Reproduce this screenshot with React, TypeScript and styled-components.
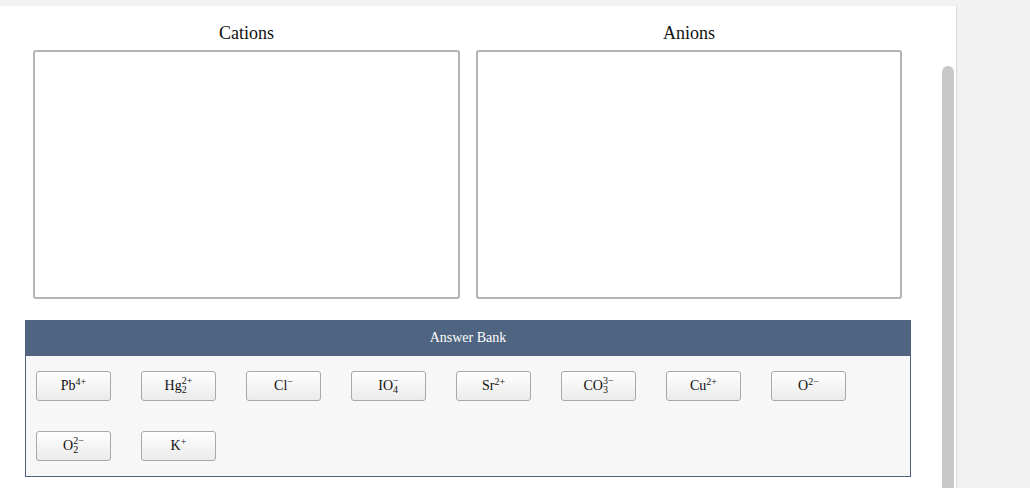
import styled, { createGlobalStyle } from "styled-components";

const GlobalStyle = createGlobalStyle`
  body {
    margin: 0;
    background: #f2f2f2;
    font-family: "Liberation Serif", "Times New Roman", serif;
  }
`;

const Page = styled.div`
  position: relative;
  width: 956px;
  height: 482px;
  margin-top: 6px;
  background: #ffffff;
  box-shadow: 1px 0 1px #dcdcdc;
  overflow: hidden;
`;

const ScrollThumb = styled.div`
  position: absolute;
  left: 942px;
  top: 60px;
  width: 12px;
  height: 440px;
  border-radius: 6px;
  background: #c8c8c8;
`;

const Columns = styled.div`
  display: grid;
  grid-template-columns: 427px 426px;
  column-gap: 16px;
  padding-left: 33px;
`;

const Column = styled.div`
  display: flex;
  flex-direction: column;
`;

const Title = styled.div`
  height: 44px;
  padding-top: 17px;
  box-sizing: border-box;
  text-align: center;
  font-size: 18px;
  line-height: 20px;
  color: #111;
`;

const DropBox = styled.div`
  height: 249px;
  box-sizing: border-box;
  border: 2px solid #b4b4b4;
  border-radius: 3px;
  background: #fff;
`;

const Bank = styled.div`
  width: 886px;
  margin: 21px 0 0 25px;
`;

const BankHeader = styled.div`
  height: 36px;
  background: #4e6480;
  color: #fff;
  font-size: 14px;
  display: flex;
  align-items: center;
  justify-content: center;
`;

const BankBody = styled.div`
  display: flex;
  flex-wrap: wrap;
  gap: 30px;
  padding: 15px 10px 15px 10px;
  background: #f7f7f7;
  border: 1px solid #4e6480;
  border-top: none;
`;

const Chip = styled.div`
  width: 75px;
  height: 30px;
  box-sizing: border-box;
  border: 1px solid #a9a9a9;
  border-radius: 3px;
  background: linear-gradient(#ffffff, #ebebeb);
  display: flex;
  align-items: center;
  justify-content: center;
  font-size: 14px;
  color: #111;
`;

const Base = styled.span`
  line-height: 1;
`;

const Scripts = styled.span`
  display: inline-flex;
  flex-direction: column;
  font-size: 10px;
  line-height: 9px;
  transform: translateY(-1px);
`;

const Sup = styled.span`
  font-size: 10px;
  position: relative;
  top: -5px;
`;

interface IonProps {
  base: string;
  sup: string;
  sub?: string;
}

function Ion({ base, sup, sub }: IonProps) {
  return (
    <Chip>
      <Base>{base}</Base>
      {sub ? (
        <Scripts>
          <span>{sup}</span>
          <span>{sub}</span>
        </Scripts>
      ) : (
        <Sup>{sup}</Sup>
      )}
    </Chip>
  );
}

const ions: IonProps[] = [
  { base: "Pb", sup: "4+" },
  { base: "Hg", sup: "2+", sub: "2" },
  { base: "Cl", sup: "−" },
  { base: "IO", sup: "−", sub: "4" },
  { base: "Sr", sup: "2+" },
  { base: "CO", sup: "3−", sub: "3" },
  { base: "Cu", sup: "2+" },
  { base: "O", sup: "2−" },
  { base: "O", sup: "2−", sub: "2" },
  { base: "K", sup: "+" },
];

export default function App() {
  return (
    <>
      <GlobalStyle />
      <Page>
        <Columns>
          <Column>
            <Title>Cations</Title>
            <DropBox />
          </Column>
          <Column>
            <Title>Anions</Title>
            <DropBox />
          </Column>
        </Columns>
        <Bank>
          <BankHeader>Answer Bank</BankHeader>
          <BankBody>
            {ions.map((ion, i) => (
              <Ion key={i} {...ion} />
            ))}
          </BankBody>
        </Bank>
        <ScrollThumb />
      </Page>
    </>
  );
}
